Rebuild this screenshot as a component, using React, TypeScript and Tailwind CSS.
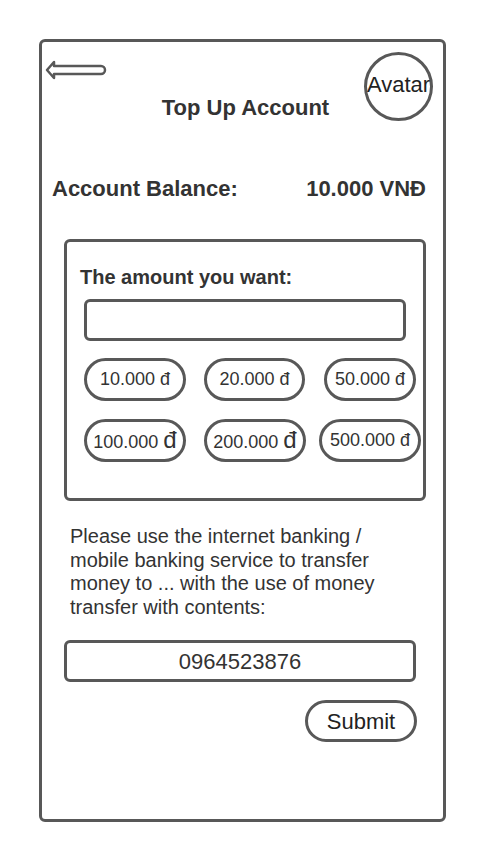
const amounts: { label: string; big?: boolean; w: string; ml: string }[][] = [
  [
    { label: "10.000", w: "w-[102px]", ml: "ml-0" },
    { label: "20.000", w: "w-[101px]", ml: "ml-[18px]" },
    { label: "50.000", w: "w-[92px]", ml: "ml-[19px]" },
  ],
  [
    { label: "100.000", big: true, w: "w-[102px]", ml: "ml-0" },
    { label: "200.000", big: true, w: "w-[102px]", ml: "ml-[18px]" },
    { label: "500.000", w: "w-[102px]", ml: "ml-[13px]" },
  ],
];

function BackArrow() {
  return (
    <svg width="62" height="22" viewBox="0 0 62 22" className="mt-[7px] ml-[3px]">
      <path
        d="M2 11 L9 3 L9 7 L56 7 A4 4 0 0 1 56 15 L9 15 L9 19 Z"
        fill="white"
        stroke="#585858"
        strokeWidth="2.5"
        strokeLinejoin="round"
      />
    </svg>
  );
}

export default function App() {
  return (
    <div className="min-h-[860px] w-[485px] bg-white pt-[39px] font-['Liberation_Sans',Arial,sans-serif] text-[#333]">
      <div className="ml-[39px] h-[783px] w-[407px] rounded-[6px] border-[3px] border-[#585858]">
        {/* header */}
        <div className="grid grid-cols-[1fr_auto_1fr] pt-[10px]">
          <div className="justify-self-start">
            <BackArrow />
          </div>
          <h1 className="self-end pl-[6px] text-[22px] font-bold leading-[26px]">Top Up Account</h1>
          <div className="mr-[10px] flex h-[69px] w-[69px] items-center justify-center justify-self-end rounded-full border-[3px] border-[#585858]">
            <span className="mb-[4px] whitespace-nowrap text-[22px] leading-none text-[#222]">Avatar</span>
          </div>
        </div>

        {/* balance */}
        <div className="mt-[55px] flex items-center justify-between pl-[10px] pr-[17px] text-[22px] font-bold leading-[26px]">
          <span>Account Balance:</span>
          <span>10.000 VNĐ</span>
        </div>

        {/* amount box */}
        <div className="ml-[22px] mt-[37px] h-[262px] w-[362px] rounded-[6px] border-[3px] border-[#585858]">
          <p className="ml-[13px] mt-[24px] text-[20px] font-bold leading-[22px]">The amount you want:</p>
          <div className="ml-[17px] mt-[11px] h-[42px] w-[322px] rounded-[6px] border-[3px] border-[#585858]" />
          {amounts.map((row, i) => (
            <div key={i} className={`ml-[17px] flex ${i === 0 ? "mt-[17px]" : "mt-[18px]"}`}>
              {row.map((a) => (
                <div
                  key={a.label}
                  className={`${a.w} ${a.ml} flex h-[43px] items-center justify-center whitespace-nowrap rounded-full border-[3px] border-[#585858] pb-[2px] text-[18px] leading-none`}
                >
                  <span>
                    {a.label} <span className={a.big ? "text-[24px]" : ""}>đ</span>
                  </span>
                </div>
              ))}
            </div>
          ))}
        </div>

        {/* instructions */}
        <p className="ml-[28px] mt-[24px] w-[335px] text-[20px] leading-[23.5px]">
          Please use the internet banking / mobile banking service to transfer money to ... with the use of money transfer with contents:
        </p>

        <div className="ml-[22px] mt-[21px] flex h-[42px] w-[352px] items-center justify-center rounded-[6px] border-[3px] border-[#585858] text-[22px]">
          0964523876
        </div>

        <div className="mt-[18px] flex justify-end pr-[26px]">
          <button className="h-[42px] w-[112px] rounded-full border-[3px] border-[#585858] text-[22px] text-[#222]">
            Submit
          </button>
        </div>
      </div>
    </div>
  );
}
